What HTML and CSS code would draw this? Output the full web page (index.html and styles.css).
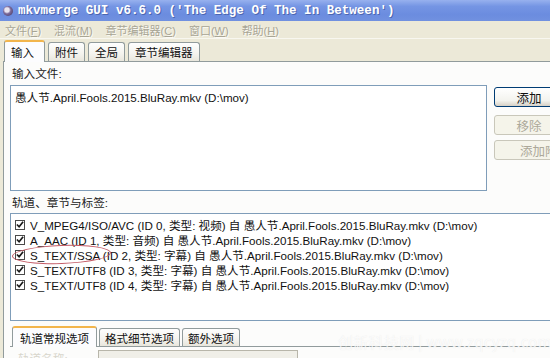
FILE: index.html
```html
<!DOCTYPE html>
<html>
<head>
<meta charset="utf-8">
<link rel="stylesheet" href="styles.css">
</head>
<body>
<div class="win">
  <div class="titlebar">
    <span class="appicon"></span>
    <span class="title">mkvmerge GUI v6.6.0 ('The Edge Of The In Between')</span>
  </div>
  <div class="menubar">
    <span class="mi">文件(<u>F</u>)</span>
    <span class="mi">混流(<u>M</u>)</span>
    <span class="mi">章节编辑器(<u>C</u>)</span>
    <span class="mi">窗口(<u>W</u>)</span>
    <span class="mi">帮助(<u>H</u>)</span>
  </div>
  <div class="tabs">
    <div class="tab active">输入</div>
    <div class="tab">附件</div>
    <div class="tab">全局</div>
    <div class="tab">章节编辑器</div>
  </div>
  <div class="panel">
    <div class="label">输入文件:</div>
    <div class="inrow">
      <div class="listbox files">
        <div class="fitem">愚人节.April.Fools.2015.BluRay.mkv (D:\mov)</div>
      </div>
      <div class="btns">
        <div class="btn">添加</div>
        <div class="btn dis">移除</div>
        <div class="btn dis shifted">添加附加部分</div>
      </div>
    </div>
    <div class="label second">轨道、章节与标签:</div>
    <div class="listbox tracks">
      <div class="trow"><span class="cb"><svg width="9" height="9" viewBox="0 0 9 9"><path d="M1 4.5 L3.5 7 L8 1.5" fill="none" stroke="#1a1a1a" stroke-width="1.9"/></svg></span>V_MPEG4/ISO/AVC (ID 0, 类型: 视频) 自 愚人节.April.Fools.2015.BluRay.mkv (D:\mov)</div>
      <div class="trow"><span class="cb"><svg width="9" height="9" viewBox="0 0 9 9"><path d="M1 4.5 L3.5 7 L8 1.5" fill="none" stroke="#1a1a1a" stroke-width="1.9"/></svg></span>A_AAC (ID 1, 类型: 音频) 自 愚人节.April.Fools.2015.BluRay.mkv (D:\mov)</div>
      <div class="trow"><span class="cb"><svg width="9" height="9" viewBox="0 0 9 9"><path d="M1 4.5 L3.5 7 L8 1.5" fill="none" stroke="#1a1a1a" stroke-width="1.9"/></svg></span>S_TEXT/SSA (ID 2, 类型: 字幕) 自 愚人节.April.Fools.2015.BluRay.mkv (D:\mov)</div>
      <div class="trow"><span class="cb"><svg width="9" height="9" viewBox="0 0 9 9"><path d="M1 4.5 L3.5 7 L8 1.5" fill="none" stroke="#1a1a1a" stroke-width="1.9"/></svg></span>S_TEXT/UTF8 (ID 3, 类型: 字幕) 自 愚人节.April.Fools.2015.BluRay.mkv (D:\mov)</div>
      <div class="trow"><span class="cb"><svg width="9" height="9" viewBox="0 0 9 9"><path d="M1 4.5 L3.5 7 L8 1.5" fill="none" stroke="#1a1a1a" stroke-width="1.9"/></svg></span>S_TEXT/UTF8 (ID 4, 类型: 字幕) 自 愚人节.April.Fools.2015.BluRay.mkv (D:\mov)</div>
      <span class="ellipse"></span>
    </div>
    <div class="subtabs">
      <div class="stab active">轨道常规选项</div>
      <div class="stab">格式细节选项</div>
      <div class="stab">额外选项</div>
    </div>
    <div class="subpanel">
      <span class="faint">轨道名称:</span>
      <span class="field"></span>
    </div>
  </div>
  <div class="watermark">创新科技网 | www.zqcyzq.com</div>
</div>
</body>
</html>
```

FILE: styles.css
```css
* { box-sizing: border-box; }
html, body { margin: 0; padding: 0; background: #ece9d8; }
.win {
  position: relative;
  width: 550px;
  height: 358px;
  overflow: hidden;
  background: #ece9d8;
  font-family: "Liberation Sans", "Noto Sans CJK SC", sans-serif;
  font-size: 11.6px;
  color: #111;
}
.titlebar {
  height: 21px;
  display: flex;
  align-items: center;
  padding-left: 3px;
  gap: 5px;
  background: linear-gradient(#97b1ee 0%, #7595e4 30%, #6b8cdf 70%, #7191e0 100%);
}
.appicon {
  width: 10px;
  height: 10px;
  border-radius: 50%;
  background: radial-gradient(circle at 40% 40%, #e8e4f0 0 25%, #7c6a9a 45%, #3b2f55 100%);
}
.title {
  font-family: "Liberation Mono", monospace;
  font-weight: bold;
  font-size: 12.55px;
  color: #fff;
  text-shadow: 1px 1px 0 #4c66b0;
  white-space: nowrap;
}
.menubar {
  height: 18px;
  display: flex;
  align-items: center;
  gap: 13px;
  padding-left: 5px;
  background: #ece9d8;
  border-bottom: 1px solid #f8f7f0;
}
.mi {
  font-size: 11px;
  color: #a8a595;
  text-shadow: 1px 1px 0 #fbfaf4;
  white-space: nowrap;
}
.tabs {
  height: 22px;
  display: flex;
  align-items: flex-end;
  gap: 2px;
  padding-left: 4px;
}
.tab {
  height: 19px;
  padding: 0 6px;
  display: flex;
  align-items: center;
  font-size: 11.5px;
  border: 1px solid #919b9c;
  border-bottom: none;
  border-radius: 3px 3px 0 0;
  background: linear-gradient(#fefefe, #f4f3ee 60%, #e8e6dc);
  margin-right: 1px;
}
.tab.active {
  height: 22px;
  width: 41px;
  padding: 0 0 0 6px;
  margin-bottom: -1px;
  border-top: 2px solid #f2b54c;
  background: #fcfcfe;
  position: relative;
  z-index: 1;
}
.panel {
  margin-left: 3px;
  width: 640px;
  border-left: 1px solid #919b9c;
  border-top: 1px solid #919b9c;
  background: #fcfcfb;
  padding: 5px 0 0 6px;
  height: 300px;
}
.label {
  height: 14px;
  line-height: 14px;
  padding-left: 2px;
  color: #222;
}
.label.second { margin-top: 5px; }
.inrow {
  display: flex;
  margin-top: 4px;
  gap: 7px;
}
.listbox {
  background: #fff;
  border: 1px solid #7f9db9;
}
.files {
  width: 477px;
  height: 106px;
  padding: 3px 4px;
}
.fitem { white-space: nowrap; }
.btns {
  display: flex;
  flex-direction: column;
}
.btn {
  width: 70px;
  height: 20px;
  display: flex;
  align-items: center;
  justify-content: center;
  border: 1px solid #003c74;
  border-radius: 3px;
  background: linear-gradient(#ffffff, #f3f3ee 70%, #d6d0c5);
  margin-top: 2px;
  font-size: 12.5px;
  white-space: nowrap;
  overflow: hidden;
}
.btn.dis {
  border-color: #c9c7ba;
  background: #f5f4ea;
  color: #aca899;
  margin-top: 8px;
}
.btn.shifted {
  margin-top: 5px;
  justify-content: flex-start;
  padding-left: 25px;
}
.tracks {
  position: relative;
  margin-top: 3px;
  height: 108px;
  padding-top: 3px;
  border-color: #7f9db9;
}
.trow {
  height: 15px;
  display: flex;
  align-items: center;
  white-space: nowrap;
  padding-left: 4px;
}
.cb {
  width: 10px;
  height: 10px;
  border: 1px solid #4a4a4a;
  background: #fff;
  display: inline-flex;
  align-items: center;
  justify-content: center;
  margin-right: 5px;
  flex: none;
}
.cb svg { display: block; }
.ellipse {
  position: absolute;
  left: 1px;
  top: 31px;
  width: 99px;
  height: 19px;
  border: 1px solid #c45b66;
  border-radius: 50%;
  transform: rotate(-2deg);
}
.subtabs {
  margin-top: 4px;
  height: 22px;
  display: flex;
  align-items: flex-end;
  gap: 2px;
  padding-left: 2px;
  border-bottom: 1px solid #919b9c;
}
.stab {
  height: 18px;
  padding: 0 5px;
  display: flex;
  align-items: center;
  font-size: 11.5px;
  border: 1px solid #919b9c;
  border-bottom: none;
  border-radius: 3px 3px 0 0;
  background: linear-gradient(#fefefe, #f4f3ee 60%, #e8e6dc);
}
.stab.active {
  height: 21px;
  margin-bottom: -1px;
  border-top: 2px solid #f2b54c;
  background: #fcfcfe;
  padding: 0 7px;
}
.subpanel {
  display: flex;
  align-items: flex-start;
  gap: 30px;
  padding: 3px 0 0 8px;
}
.faint { color: #d8d6cc; }
.field {
  width: 200px;
  height: 20px;
  border: 1px solid #b8b6aa;
  background: #f0efe8;
}
.watermark {
  position: absolute;
  left: 338px;
  top: 331px;
  font-family: "Noto Sans CJK SC", sans-serif;
  font-size: 15px;
  color: rgba(255, 255, 255, 0.8);
  text-shadow: 0 0 1px rgba(200, 200, 200, 0.4);
  letter-spacing: 0.3px;
  white-space: nowrap;
}
```
